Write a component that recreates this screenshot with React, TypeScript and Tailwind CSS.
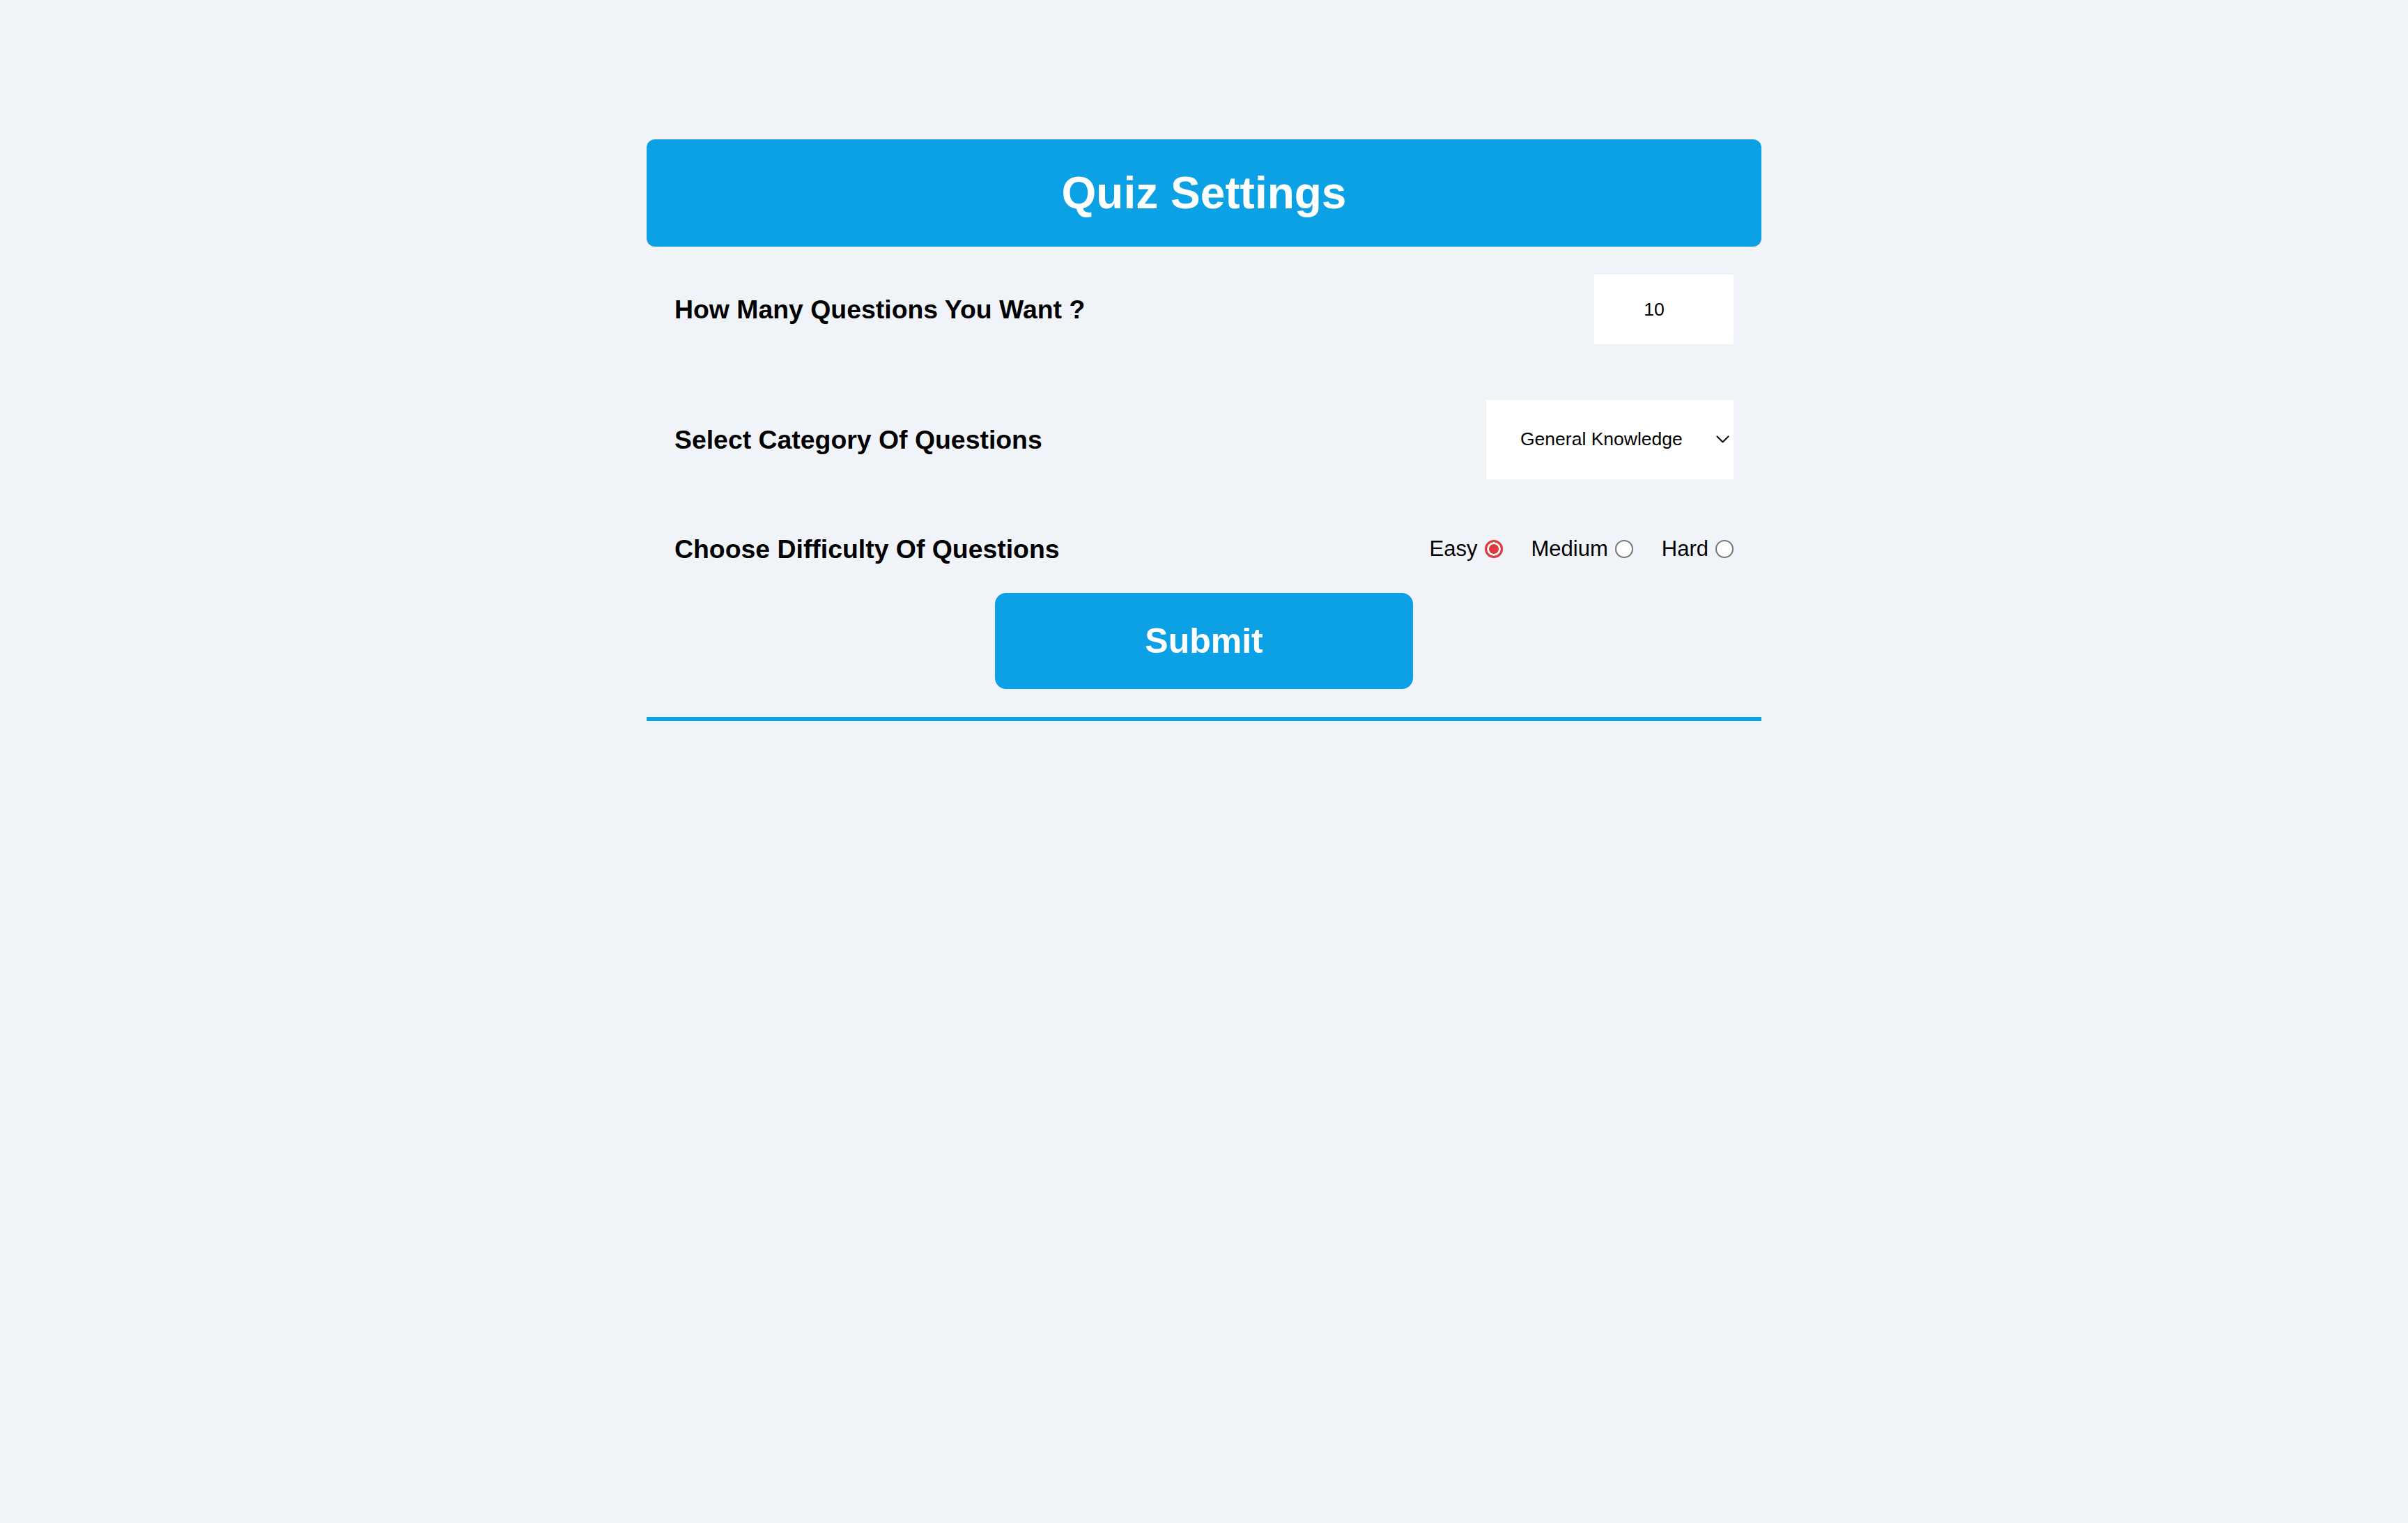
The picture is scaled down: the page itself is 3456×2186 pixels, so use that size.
import React, { useState } from "react";

export default function App() {
  const [difficulty, setDifficulty] = useState("easy");
  const [count, setCount] = useState("10");
  const [category, setCategory] = useState("9");

  const levels = [
    { id: "easy", label: "Easy" },
    { id: "medium", label: "Medium" },
    { id: "hard", label: "Hard" },
  ];

  return (
    <div
      className="min-h-screen w-full bg-[#f0f4f9] pt-[200px]"
      style={{ fontFamily: '"Liberation Sans", Arial, Helvetica, sans-serif' }}
    >
      <div className="mx-auto w-[1600px]">
        <div className="flex h-[154px] items-center justify-center rounded-[12px] bg-[#0ca0e4]">
          <h1 className="text-[64px] font-bold leading-none text-white">Quiz Settings</h1>
        </div>

        <form onSubmit={(e) => e.preventDefault()}>
          <div className="mt-[40px] flex h-[100px] items-center justify-between px-[40px]">
            <label className="text-[37.4px] font-bold text-black">How Many Questions You Want ?</label>
            <input
              type="text"
              inputMode="numeric"
              value={count}
              onChange={(e) => setCount(e.target.value)}
              className="h-[100px] w-[200px] border-0 bg-white pr-[28px] text-center text-[26.67px] text-black outline-none"
            />
          </div>

          <div className="mt-[80px] flex h-[114px] items-center justify-between px-[40px]">
            <label className="text-[37.4px] font-bold text-black">Select Category Of Questions</label>
            <div className="relative h-[114px] w-[355px]">
              <select
                value={category}
                onChange={(e) => setCategory(e.target.value)}
                className="h-full w-full appearance-none border-0 bg-white pl-[49px] text-[26.5px] text-black outline-none"
              >
                <option value="9">General Knowledge</option>
                <option value="10">Books</option>
                <option value="11">Film</option>
                <option value="12">Music</option>
              </select>
              <svg
                className="pointer-events-none absolute right-[6px] top-[51px]"
                width="19"
                height="12"
                viewBox="0 0 19 12"
                fill="none"
              >
                <path d="M1.5 1.5 L9.5 9.5 L17.5 1.5" stroke="#111" strokeWidth="2.2" strokeLinecap="round" strokeLinejoin="round" />
              </svg>
            </div>
          </div>

          <div className="mt-[80px] flex h-[40px] items-center justify-between px-[40px]">
            <label className="text-[37.4px] font-bold text-black">Choose Difficulty Of Questions</label>
            <div className="flex items-center">
              {levels.map((l, i) => (
                <label
                  key={l.id}
                  className={`flex items-center text-[31px] text-black ${i > 0 ? "ml-[41px]" : ""}`}
                >
                  {l.label}
                  <input
                    type="radio"
                    name="difficulty"
                    checked={difficulty === l.id}
                    onChange={() => setDifficulty(l.id)}
                    className="m-0 ml-[10px] h-[26px] w-[26px] appearance-none rounded-full border-[2.5px] border-[#767676] bg-white checked:border-[3px] checked:border-[#e0393e] checked:bg-[#e0393e] checked:shadow-[inset_0_0_0_3px_#ffffff]"
                  />
                </label>
              ))}
            </div>
          </div>

          <div className="mt-[43px] flex justify-center">
            <button
              type="submit"
              className="h-[138px] w-[600px] rounded-[16px] bg-[#0ca0e4] text-[50px] font-bold text-white"
            >
              Submit
            </button>
          </div>
        </form>

        <div className="mt-[40px] h-[6px] w-full bg-[#0ca0e4]" />
      </div>
    </div>
  );
}
